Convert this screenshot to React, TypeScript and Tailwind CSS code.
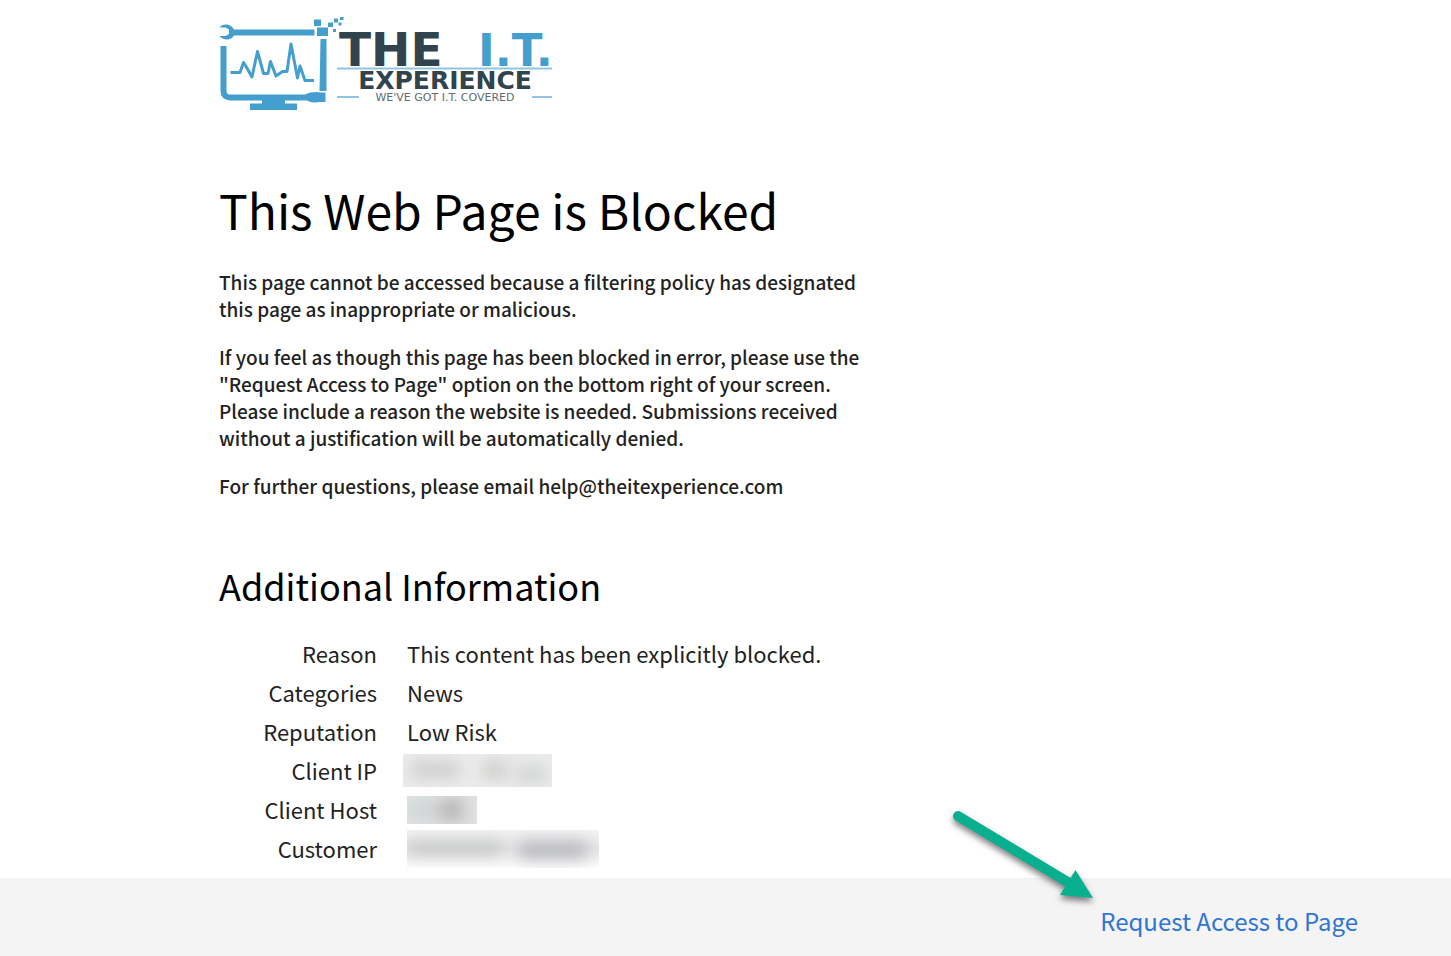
import type { ReactNode } from 'react'

type Detail = {
  label: string
  value: ReactNode
}

const details: Detail[] = [
  { label: 'Reason', value: 'This content has been explicitly blocked.' },
  { label: 'Categories', value: 'News' },
  { label: 'Reputation', value: 'Low Risk' },
  {
    label: 'Client IP',
    value: (
      <Redacted className="-ml-1 w-[149px] h-[33px] bg-[#ececec]">
        <i className="absolute left-2 top-2 w-12 h-4 bg-[#cbcccb] blur-[8px]" />
        <i className="absolute left-20 top-2 w-6 h-4 bg-[#cbcac8] blur-[8px]" />
        <i className="absolute left-28 top-3 w-8 h-4 bg-[#d0d3d3] blur-[8px]" />
      </Redacted>
    ),
  },
  {
    label: 'Client Host',
    value: (
      <Redacted className="w-[70px] h-[28px] bg-[#dfe1e2]">
        <i className="absolute left-1 top-2 w-6 h-3 bg-[#c9cfcf] blur-[8px]" />
        <i className="absolute left-8 top-1 w-6 h-5 bg-[#b5b1b3] blur-[8px]" />
      </Redacted>
    ),
  },
  {
    label: 'Customer',
    value: (
      <Redacted className="w-[192px] h-[38px] bg-linear-to-b from-[#f3f3f4] via-[#e6e6e7] to-[#fdfdfd]">
        <i className="absolute left-0 top-3 w-24 h-3 bg-[#bfc1c0] blur-[8px]" />
        <i className="absolute left-28 top-3 w-17 h-4 bg-[#b4b5b9] blur-[8px]" />
      </Redacted>
    ),
  },
]

function Redacted({ className, children }: { className: string; children: ReactNode }) {
  return <span className={`relative block overflow-hidden ${className}`}>{children}</span>
}

function Logo() {
  return (
    <svg width="336" height="98" viewBox="219 14 336 98" role="img" aria-label="The I.T. Experience">
      {/* monitor */}
      <g fill="#459fce">
        <path d="M219.500 27.500C221 25 224 24 227 24.500C230.500 25 232.500 27 234 29.500H314.500V35.500H234C232.500 38 230 39.500 227 39.500C224 39.500 221 38 219.500 36H225.500L229 34V29.500L225.500 27.500Z" />
        <path d="M220.500 46H226.500V91Q226.500 94.500 230 94.500H305L310 92.500Q317 91.500 321 92.500H325.500V102H318Q312 103.500 307 100.500H285V103.500H297V110H250V103.500H262V100.500H230Q220.500 99.500 220.500 91Z" />
        <path d="M320.500 39H326.500V91H319.500Z" />
        <path d="M314 19.500H321V26H314Z M317 27.500H328V36H317Z M328 22.500H333V27H328Z M334 18.500H338V22.500H334Z M340 17H343.500V20H340Z M338.500 22.500H341.500V25.500H338.500Z M333 29H336V32H333Z" />
      </g>
      <path
        d="M230.500 72.500H240L243.500 62.500L247.500 69L252 77L257.500 51.500L263.500 73.500H268L270.500 61.500L276 76L282.500 71.500H287L291 44L297.500 78L300 66L305 80.500H314"
        fill="none"
        stroke="#459fce"
        strokeWidth="3"
        strokeLinejoin="round"
      />
      <g className="font-['DejaVu_Sans',sans-serif]">
        <text x="339" y="66" fontSize="47" fontWeight="700" fill="#31434c">THE</text>
        <text x="478" y="66" fontSize="45" fontWeight="700" fill="#459fce">I.T.</text>
        <text x="445" y="89" fontSize="25" fontWeight="700" fill="#31434c" textAnchor="middle">
          EXPERIENCE
        </text>
        <text x="445" y="101" fontSize="11" fill="#5f6b72" textAnchor="middle">
          WE'VE GOT I.T. COVERED
        </text>
      </g>
      <path d="M337 68.500H552M337 97H359M532 97H552" stroke="#8fc5e2" strokeWidth="2" />
    </svg>
  )
}

function Arrow() {
  return (
    <svg
      width="160"
      height="110"
      viewBox="944 800 160 110"
      className="absolute -left-39 -top-24 pointer-events-none drop-shadow-[0px_4px_3px_rgba(0,0,0,0.5)]"
      aria-hidden="true"
    >
      <path d="M958 817L1071 885" stroke="#08b090" strokeWidth="10" strokeLinecap="round" />
      <path d="M1075.500 871L1093 899L1060 896Z" fill="#08b090" />
    </svg>
  )
}

export default function App() {
  return (
    <div className="min-h-screen flex flex-col bg-white text-[#222222] font-['Noto_Sans_CJK_SC',sans-serif]">
      <main className="flex-1 pl-[219px] pr-8">
        <header className="pt-[14px]">
          <Logo />
        </header>

        <h1 className="mt-[61px] text-[48px] leading-[72px] text-black">This Web Page is Blocked</h1>

        <div className="mt-[23px] max-w-[660px] space-y-[21px] text-[19px] leading-[27px] font-medium">
          <p>This page cannot be accessed because a filtering policy has designated this page as inappropriate or malicious.</p>
          <p>
            If you feel as though this page has been blocked in error, please use the "Request Access to Page" option on
            the bottom right of your screen. Please include a reason the website is needed. Submissions received without
            a justification will be automatically denied.
          </p>
          <p>For further questions, please email help@theitexperience.com</p>
        </div>

        <h2 className="mt-[59px] text-[36px] leading-[54px] text-black">Additional Information</h2>

        <table className="mt-[22px] text-[22px] leading-[33px]">
          <tbody>
            {details.map((d) => (
              <tr key={d.label} className="h-[39px]">
                <th scope="row" className="w-[158px] p-0 text-right font-normal">{d.label}</th>
                <td className="p-0 pl-[30px]">{d.value}</td>
              </tr>
            ))}
          </tbody>
        </table>
      </main>

      <footer className="h-[78px] flex items-center justify-end bg-[#f4f4f4] pr-[93px]">
        <div className="relative pt-[8px]">
          <Arrow />
          <a href="#" className="text-[24px] leading-[36px] text-[#2f75d3]">Request Access to Page</a>
        </div>
      </footer>
    </div>
  )
}
